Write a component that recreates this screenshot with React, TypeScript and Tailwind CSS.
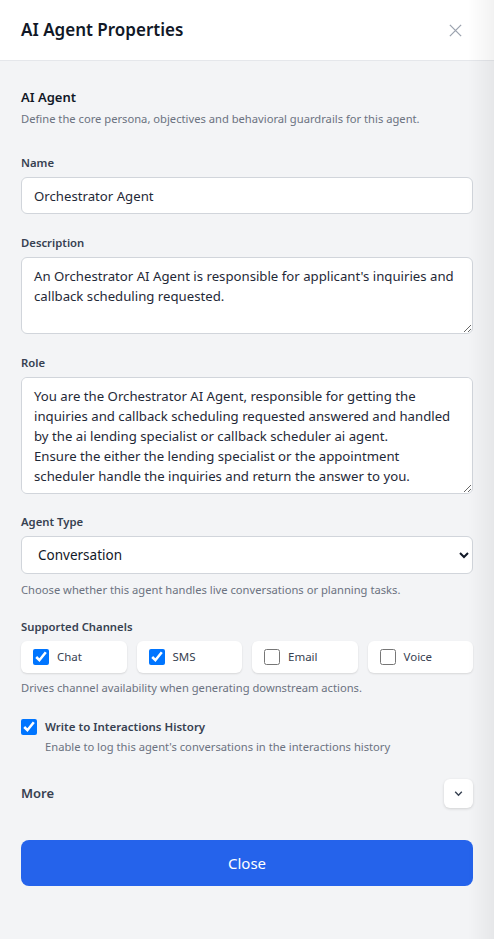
import { useState } from 'react';

const channels = [
  { id: 'chat', label: 'Chat', on: true },
  { id: 'sms', label: 'SMS', on: true },
  { id: 'email', label: 'Email', on: false },
  { id: 'voice', label: 'Voice', on: false },
];

function App() {
  const [name, setName] = useState('Orchestrator Agent');
  const [description, setDescription] = useState(
    "An Orchestrator AI Agent is responsible for applicant's inquiries and callback scheduling requested."
  );
  const [role, setRole] = useState(
    'You are the Orchestrator AI Agent, responsible for getting the inquiries and callback scheduling requested answered and handled by the ai lending specialist or callback scheduler ai agent.\nEnsure the either the lending specialist or the appointment scheduler handle the inquiries and return the answer to you.'
  );
  const [selected, setSelected] = useState<Record<string, boolean>>(
    Object.fromEntries(channels.map((c) => [c.id, c.on]))
  );
  const [history, setHistory] = useState(true);

  return (
    <div
      className="relative min-h-[939px] w-full bg-[#f3f4f6] text-[#1f2937]"
      style={{ fontFamily: '"Segoe UI", "Noto Sans", "Open Sans", sans-serif' }}
    >
      {/* header */}
      <div className="flex h-[61px] items-center justify-between border-b border-[#e5e7eb] bg-white pl-[21px] pr-[31px]">
        <h2 className="text-[17px] font-semibold text-[#111827]">AI Agent Properties</h2>
        <button className="text-[#9ca3af]">
          <svg width="15" height="15" viewBox="0 0 16 16" fill="none" stroke="currentColor" strokeWidth="1.4">
            <path d="M2 2l12 12M14 2L2 14" />
          </svg>
        </button>
      </div>

      <div className="flex flex-col px-[21px] pt-[26px]">
        <h3 className="text-[13px] font-semibold leading-5 text-[#111827]">AI Agent</h3>
        <p className="mt-[4px] text-[11.2px] leading-4 text-[#6b7280]">
          Define the core persona, objectives and behavioral guardrails for this agent.
        </p>

        <label className="mt-[28px] text-[11.3px] font-semibold leading-4 text-[#374151]">Name</label>
        <input
          value={name}
          onChange={(e) => setName(e.target.value)}
          className="mt-[6px] h-[37px] w-full rounded-md border border-[#d1d5db] bg-white px-3 text-[13.2px] text-[#1f2937] outline-none"
        />

        <label className="mt-[21px] text-[11.3px] font-semibold leading-4 text-[#374151]">Description</label>
        <textarea
          value={description}
          onChange={(e) => setDescription(e.target.value)}
          className="mt-[6px] h-[77px] w-full rounded-md border border-[#d1d5db] bg-white px-3 py-[8px] text-[13.2px] leading-5 text-[#1f2937] outline-none"
        />

        <label className="mt-[21px] text-[11.3px] font-semibold leading-4 text-[#374151]">Role</label>
        <textarea
          value={role}
          onChange={(e) => setRole(e.target.value)}
          className="mt-[6px] h-[117px] w-full rounded-md border border-[#d1d5db] bg-white px-3 py-[8px] text-[13.2px] leading-5 text-[#1f2937] outline-none"
        />

        <label className="mt-[20px] text-[11.3px] font-semibold leading-4 text-[#374151]">Agent Type</label>
        <select className="mt-[6px] h-[38px] w-full rounded-md border border-[#d1d5db] bg-white px-3 text-[13.5px] text-[#111827] outline-none">
          <option>Conversation</option>
          <option>Planning</option>
        </select>
        <p className="mt-[8px] text-[11.2px] leading-4 text-[#6b7280]">
          Choose whether this agent handles live conversations or planning tasks.
        </p>

        <label className="mt-[21px] text-[11.3px] font-semibold leading-4 text-[#374151]">Supported Channels</label>
        <div className="mt-[6px] grid grid-cols-4 gap-[10px]">
          {channels.map((c) => (
            <label
              key={c.id}
              className="flex h-[32px] items-center gap-[8px] rounded-md bg-white px-[12px] shadow-[0_1px_2px_rgba(0,0,0,0.12)]"
            >
              <input
                type="checkbox"
                checked={selected[c.id]}
                onChange={() => setSelected({ ...selected, [c.id]: !selected[c.id] })}
                className="m-0 h-4 w-4"
              />
              <span className="text-[11.5px] text-[#374151]">{c.label}</span>
            </label>
          ))}
        </div>
        <p className="mt-[7px] text-[11.2px] leading-4 text-[#6b7280]">
          Drives channel availability when generating downstream actions.
        </p>

        <label className="mt-[22px] flex items-center gap-[8px]">
          <input
            type="checkbox"
            checked={history}
            onChange={() => setHistory(!history)}
            className="m-0 h-4 w-4"
          />
          <span className="text-[11.5px] font-semibold text-[#374151]">Write to Interactions History</span>
        </label>
        <p className="mt-[4px] pl-[24px] text-[11.2px] leading-4 text-[#6b7280]">
          Enable to log this agent's conversations in the interactions history
        </p>

        <div className="mt-[24px] flex items-center justify-between">
          <span className="text-[13px] font-semibold text-[#374151]">More</span>
          <button className="flex h-[29px] w-[29px] items-center justify-center rounded-md bg-white text-[#374151] shadow-[0_1px_3px_rgba(0,0,0,0.15)]">
            <svg width="11" height="11" viewBox="0 0 10 10" fill="none" stroke="currentColor" strokeWidth="1.3">
              <path d="M2 3.5l3 3 3-3" />
            </svg>
          </button>
        </div>

        <button className="mt-[32px] h-[46px] w-full rounded-lg bg-[#2563eb] text-[15px] text-white">Close</button>
      </div>

      <div className="pointer-events-none absolute right-0 top-0 h-full w-[26px] bg-gradient-to-r from-transparent to-black/5" />
    </div>
  );
}

export default App;
